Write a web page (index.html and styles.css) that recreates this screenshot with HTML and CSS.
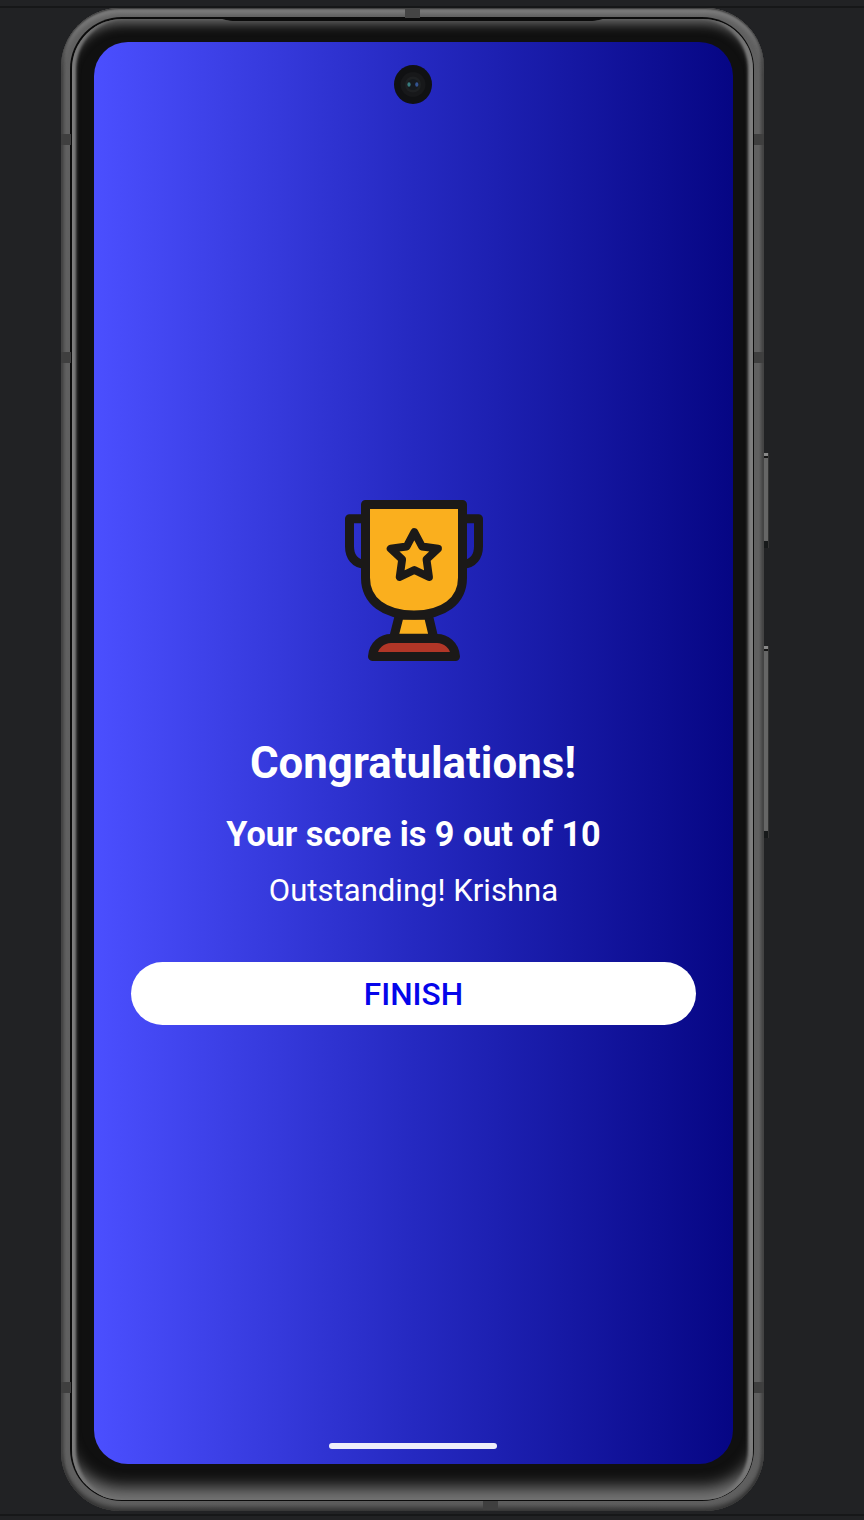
FILE: index.html
```html
<!DOCTYPE html>
<html lang="en">
<head>
<meta charset="utf-8">
<title>Quiz result</title>
<link rel="stylesheet" href="styles.css">
</head>
<body>
<div class="stage">
  <div class="phone">
    <i class="antenna left a1"></i><i class="antenna left a2"></i><i class="antenna left a3"></i>
    <i class="antenna right a1"></i><i class="antenna right a2"></i><i class="antenna right a3"></i>
    <i class="antenna top"></i><i class="antenna bottom"></i>
    <i class="key power"></i><i class="key volume"></i>
    <div class="seam">
      <div class="bezel">
        <svg class="speaker" viewBox="0 0 387 3" aria-hidden="true"><path d="M0 0H387C382 1 379 3 370 3H17C8 3 5 1 0 0Z" fill="#0b0b0b"/></svg>
        <main class="screen">
          <svg class="camera" viewBox="0 0 38 39" aria-hidden="true">
            <ellipse cx="19" cy="19.500" rx="19" ry="19.500" fill="#101113"/>
            <circle cx="19" cy="19.500" r="12.500" fill="#17181a"/>
            <circle cx="19" cy="19.500" r="8" fill="#1e2022"/>
            <circle cx="19" cy="19.500" r="5.500" fill="#15191e"/>
            <ellipse cx="15" cy="19.500" rx="1.600" ry="2.300" fill="#397c7e"/>
            <ellipse cx="22.800" cy="19.500" rx="1.600" ry="2.300" fill="#345490"/>
          </svg>
          <svg class="trophy" viewBox="0 0 510 570" fill="none" stroke="#1b1918" stroke-width="27" stroke-linejoin="round" aria-hidden="true">
            <path d="M107 101H58.500V184C58.500 215 75 236 104 238M397 101H445.500V184C445.500 215 429 236 400 238"/>
            <path d="M208 391L190.500 460H311.500L295 391Z" fill="#faaf1e"/>
            <path d="M106.500 58.500H397.500V278C397.500 348 340 390 252 390S106.500 348 106.500 278Z" fill="#faaf1e"/>
            <path d="M127.500 514.500H376.500C374 480 347 460.500 321 460.500H183C157 460.500 130 480 127.500 514.500Z" fill="#b13627"/>
            <path d="M253 141L276 184.500L324 191L289.500 223L297 276L253 255L209 276L216.500 223L182 191L230 184.500Z" stroke-width="23.500"/>
          </svg>
          <h1 class="title">Congratulations!</h1>
          <p class="score">Your score is 9 out of 10</p>
          <p class="remark">Outstanding! Krishna</p>
          <button class="finish">FINISH</button>
          <div class="home-bar"></div>
        </main>
      </div>
    </div>
  </div>
</div>
</body>
</html>
```
FILE: styles.css
```css
* { box-sizing: border-box; }
body { margin: 0; background: #212224; font-family: Roboto, sans-serif; }
.stage {
  height: 1520px;
  padding: 8px 100px 8px 61px;
  overflow: hidden;
  background: linear-gradient(#161718, #161718) 0 6px / 100% 2px no-repeat,
              linear-gradient(#161718, #161718) 0 1514px / 100% 2px no-repeat, #212224;
}
.phone {
  position: relative;
  height: 1503px;
  padding: 9px 10px 10px 9px;
  border-radius: 59px;
  background: linear-gradient(90deg, #4c4c4c, #606060 5px, #5c5c5c 50%, #606060 698px, #484848);
  box-shadow: inset 0 1px 2px #303030, inset 0 7px 5px -1px #7d7d7d, inset 0 -4px 4px #383838, inset 2px 0 2px #3c3c3c, inset -2px 0 2px #3c3c3c;
}
.seam { height: 100%; padding: 2px 1px 1px 2px; border-radius: 52px; background: #0b0b0b; }
.bezel {
  position: relative;
  height: 100%;
  padding: 23px 20px 36px 22px;
  border-radius: 50px;
  background: #101010;
  box-shadow: inset 0 9px 11px -4px #686868, inset 0 -21px 15px -8px #747474, inset 5px 0 3px -1px #858585, inset -6px 0 3px -1px #858585;
}
.screen {
  position: relative;
  display: flex;
  flex-direction: column;
  align-items: center;
  height: 1422px;
  padding: 23px 37px 15px;
  border-radius: 34px;
  background: linear-gradient(90deg, #4b4fff, #2529c1 50%, #060684);
  color: #fff;
}
.camera { width: 38px; height: 39px; margin-right: 1px; }
.trophy { width: 170px; height: 190px; margin: 381px 0 0 2px; }
.title { margin: 62px 1px 0 0; font-size: 43.8px; font-weight: 700; line-height: 52px; }
.score { margin: 25px 0 0; font-size: 34.2px; font-weight: 700; line-height: 40px; }
.remark { margin: 18px 0 0; font-size: 31.1px; line-height: 38px; }
.finish {
  width: 565px;
  height: 63px;
  margin-top: 52px;
  padding: 2px 0 0;
  border: 0;
  border-radius: 32px;
  background: #fff;
  color: #0505ea;
  font: 500 31.6px/61px Roboto, sans-serif;
}
.home-bar { width: 168px; height: 6px; margin: auto 1px 0 0; border-radius: 3px; background: #eeeefa; }
.antenna { position: absolute; background: #3f3f3f; }
.left, .right { width: 10px; height: 11px; }
.left { left: 0; }
.right { right: 0; }
.a1 { top: 126px; }
.a2 { top: 344px; }
.a3 { top: 1374px; }
.top { top: 1px; left: 344px; width: 15px; height: 9px; background: #444; }
.bottom { bottom: 1px; left: 422px; width: 15px; height: 9px; }
.speaker { position: absolute; top: -1px; left: 147px; width: 387px; height: 3px; }
.key {
  position: absolute;
  right: -5px;
  width: 5px;
  border-right: 1px solid #333;
  background: linear-gradient(#888 0 3px, #151515 3px 5px, transparent 5px), linear-gradient(0deg, #17191a 0 7px, #666 7px);
}
.power { top: 445px; height: 95px; }
.volume { top: 638px; height: 192px; }
```
